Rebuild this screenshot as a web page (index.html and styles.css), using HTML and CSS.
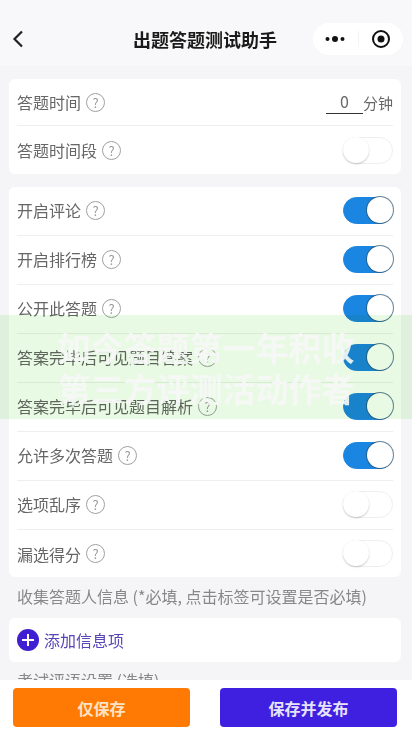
FILE: index.html
```html
<!DOCTYPE html>
<html lang="zh-CN">
<head>
    <meta charset="UTF-8">
    <meta name="viewport" content="width=device-width, initial-scale=1.0">
    <title>出题答题测试助手</title>
    <link rel="stylesheet" href="styles.css">
</head>
<body>
    <div class="page">
        <div class="navbar">
            <svg class="back" width="12" height="18" viewBox="0 0 12 18"><path d="M10 1.500 2.500 9l7.500 7.500" fill="none" stroke="#222" stroke-width="2.200"/></svg>
            <div class="nav-title">出题答题测试助手</div>
            <div class="capsule">
                <svg width="20" height="8" viewBox="0 0 20 8"><circle cx="2.500" cy="4" r="2" fill="#111"/><circle cx="10" cy="4" r="3" fill="#111"/><circle cx="17.500" cy="4" r="2" fill="#111"/></svg>
                <span class="capsule-line"></span>
                <svg width="20" height="20" viewBox="0 0 20 20"><circle cx="10" cy="10" r="8" fill="none" stroke="#111" stroke-width="2"/><circle cx="10" cy="10" r="3.500" fill="#111"/></svg>
            </div>
        </div>

        <div class="card card-time">
            <div class="row">
                <span class="label">答题时间</span><span class="help">?</span>
                <span class="minutes"><span class="minutes-input">0</span>分钟</span>
            </div>
            <div class="row">
                <span class="label">答题时间段</span><span class="help">?</span>
                <span class="switch"></span>
            </div>
        </div>

        <div class="card">
            <div class="row"><span class="label">开启评论</span><span class="help">?</span><span class="switch on"></span></div>
            <div class="row"><span class="label">开启排行榜</span><span class="help">?</span><span class="switch on"></span></div>
            <div class="row"><span class="label">公开此答题</span><span class="help">?</span><span class="switch on"></span></div>
            <div class="row"><span class="label">答案完毕后可见题目答案</span><span class="help">?</span><span class="switch on"></span></div>
            <div class="row"><span class="label">答案完毕后可见题目解析</span><span class="help">?</span><span class="switch on"></span></div>
            <div class="row"><span class="label">允许多次答题</span><span class="help">?</span><span class="switch on"></span></div>
            <div class="row"><span class="label">选项乱序</span><span class="help">?</span><span class="switch"></span></div>
            <div class="row"><span class="label">漏选得分</span><span class="help">?</span><span class="switch"></span></div>
        </div>

        <div class="section-title">收集答题人信息 (*必填, 点击标签可设置是否必填)</div>
        <div class="card add-card">
            <span class="add-icon">
                <svg width="14" height="14" viewBox="0 0 14 14"><path d="M7 1v12M1 7h12" stroke="#fff" stroke-width="2"/></svg>
            </span>
            <span class="add-text">添加信息项</span>
        </div>
        <div class="section-title">考试评语设置 (选填)</div>
    </div>

    <div class="banner">
        <div>如今答题第一年积收</div>
        <div>第三方评测活动作者</div>
    </div>

    <div class="footer">
        <button class="btn btn-save">仅保存</button>
        <button class="btn btn-publish">保存并发布</button>
    </div>
</body>
</html>
```

FILE: styles.css
```css
html, body {
    margin: 0;
    padding: 0;
    height: 100%;
    overflow: hidden;
}

body {
    position: relative;
    background: #f5f5f7;
    font-family: "Noto Sans CJK SC", "Noto Sans", sans-serif;
    color: #666;
}

.navbar {
    height: 66px;
    margin-bottom: 13px;
    box-sizing: border-box;
    padding: 23px 9px 11px 12px;
    background: #f8f8fa;
    display: flex;
    align-items: center;
    position: relative;
}

.back {
    flex: none;
}

.nav-title {
    position: absolute;
    left: 0;
    right: 2px;
    top: 23px;
    line-height: 32px;
    text-align: center;
    font-size: 18px;
    font-weight: 700;
    color: #1a1a1a;
}

.capsule {
    margin-left: auto;
    width: 90px;
    height: 32px;
    box-sizing: border-box;
    padding: 0 12px 0 12px;
    border-radius: 16px;
    background: #fff;
    display: flex;
    align-items: center;
    justify-content: space-between;
    position: relative;
}

.capsule-line {
    width: 1px;
    height: 16px;
    background: #f3f3f3;
}

.card {
    margin: 0 11px 13px 9px;
    padding: 0 8px;
    background: #fff;
    border-radius: 6px;
}

.row {
    height: 49px;
    box-sizing: border-box;
    padding-bottom: 2px;
    display: flex;
    align-items: center;
    border-bottom: 1px solid #eee;
}

.row:last-child {
    height: 47px;
    padding-bottom: 0;
    border-bottom: none;
}

.card-time .row {
    height: 47px;
    padding-bottom: 0;
}

.card-time .row:last-child {
    height: 48px;
}

.label {
    font-size: 16px;
    color: #666;
}

.help {
    width: 17px;
    height: 17px;
    margin-left: 5px;
    border: 1px solid #a0a0a0;
    border-radius: 50%;
    font-size: 13px;
    line-height: 17px;
    text-align: center;
    color: #999;
}

.minutes {
    margin-left: auto;
    display: flex;
    align-items: center;
    font-size: 15px;
    color: #666;
}

.minutes-input {
    width: 37px;
    height: 22px;
    line-height: 20px;
    border-bottom: 1px solid #333;
    text-align: center;
    font-size: 16px;
}

.switch {
    margin-left: auto;
    width: 50px;
    height: 27px;
    box-sizing: border-box;
    border: 1px solid #eee;
    border-radius: 14px;
    background: #fff;
    position: relative;
}

.switch::after {
    content: "";
    position: absolute;
    left: -1px;
    top: -1px;
    width: 26px;
    height: 26px;
    border-radius: 50%;
    background: #fff;
    box-shadow: 0 1px 2px rgba(0, 0, 0, 0.22);
}

.switch.on {
    background: #1a86e2;
    border-color: #1a86e2;
}

.switch.on::after {
    left: auto;
    right: -1px;
    box-shadow: 0 0 0 1px rgba(40, 80, 110, 0.7);
}

.section-title {
    margin: -6px 9px 0 17px;
    height: 34px;
    line-height: 24px;
    font-size: 16px;
    color: #888;
}

.add-card {
    height: 44px;
    display: flex;
    align-items: center;
    gap: 5px;
    margin-bottom: 12px;
}

.add-icon {
    width: 22px;
    height: 22px;
    border-radius: 50%;
    background: #3f1fd1;
    display: flex;
    align-items: center;
    justify-content: center;
}

.add-text {
    font-size: 16px;
    color: #5a45b8;
}

.banner {
    position: absolute;
    left: 0;
    right: 0;
    top: 315px;
    height: 104px;
    box-sizing: border-box;
    padding-top: 12px;
    text-align: center;
    font-size: 33px;
    font-weight: 700;
    line-height: 41px;
    color: rgba(245, 247, 245, 0.92);
}

/* multiply keeps the toggles and row text dark under the green strip */
.banner::before {
    content: "";
    position: absolute;
    inset: 0;
    background: #e9fae4;
    mix-blend-mode: multiply;
}

.banner div {
    position: relative;
}

.footer {
    position: absolute;
    left: 0;
    right: 0;
    bottom: 0;
    height: 55px;
    box-sizing: border-box;
    padding: 8px 15px 8px 13px;
    background: #fff;
    display: flex;
    justify-content: space-between;
}

.btn {
    width: 177px;
    height: 39px;
    border: none;
    border-radius: 4px;
    font-family: inherit;
    font-size: 16px;
    font-weight: 700;
}

.btn-save {
    background: #ff7a05;
    color: #fde3c4;
}

.btn-publish {
    background: #4020e0;
    color: #e6e3fa;
}
```
